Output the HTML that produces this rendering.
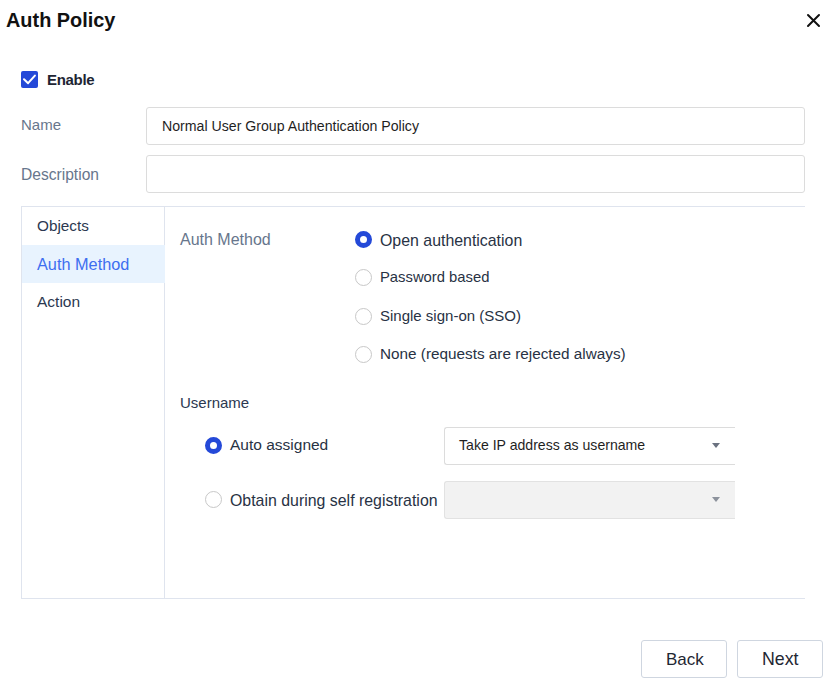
<!DOCTYPE html>
<html>
<head>
<meta charset="utf-8">
<style>
*{box-sizing:border-box;margin:0;padding:0}
html,body{width:831px;height:682px;overflow:hidden;background:#fff}
body{position:relative;font-family:"Liberation Sans",sans-serif;color:#283244}
.t{position:absolute;white-space:nowrap;line-height:1}
.box{position:absolute}
.inp{position:absolute;border:1px solid #dcdcdc;border-radius:3px;background:#fff}
.radio{position:absolute;width:17px;height:17px;border-radius:50%;border:1px solid #c8c8c8;background:#fff}
.radio.on{border:5px solid #2449d8}
.sel{position:absolute;border:1px solid #dcdcdc;border-right:none;border-radius:3px 0 0 3px;background:#fff}
.sel.dis{background:#f2f2f2;border-color:#e2e2e2}
.tri{position:absolute;width:0;height:0;border-left:4px solid transparent;border-right:4px solid transparent;border-top:5px solid #6b7280}
.btn{position:absolute;border:1px solid #cfd6e0;border-radius:3px;background:#fff;width:86px;height:38px}
</style>
</head>
<body>
<!-- header -->
<div class="t" style="left:6px;top:11px;font-size:19.9px;font-weight:bold;color:#111">Auth Policy</div>
<svg class="box" style="left:806px;top:13px" width="15" height="15" viewBox="0 0 15 15"><path d="M2 2 L13 13 M13 2 L2 13" stroke="#111" stroke-width="2" stroke-linecap="round"/></svg>

<!-- enable -->
<div class="box" style="left:21px;top:71px;width:17px;height:17px;background:#2449d8;border-radius:2px"></div>
<svg class="box" style="left:21px;top:71px" width="17" height="17" viewBox="0 0 17 17"><path d="M3 8.2 L7.1 12.2 L13.9 4.6" fill="none" stroke="#fff" stroke-width="2" stroke-linecap="round" stroke-linejoin="round"/></svg>
<div class="t" style="left:47px;top:72px;font-size:15px;letter-spacing:-0.3px;font-weight:bold;color:#1e2533">Enable</div>

<!-- name -->
<div class="t" style="left:21px;top:117px;font-size:15px;color:#67768c">Name</div>
<div class="inp" style="left:146px;top:107px;width:659px;height:38px"></div>
<div class="t" style="left:162px;top:119px;font-size:14.15px;color:#1f1f1f">Normal User Group Authentication Policy</div>

<div class="t" style="left:21px;top:167px;font-size:15.6px;color:#67768c">Description</div>
<div class="inp" style="left:146px;top:155px;width:659px;height:38px"></div>

<!-- panel -->
<div class="box" style="left:21px;top:206px;width:784px;height:1px;background:#dfe4ee"></div>
<div class="box" style="left:21px;top:598px;width:784px;height:1px;background:#dfe4ee"></div>
<div class="box" style="left:21px;top:206px;width:1px;height:393px;background:#dfe4ee"></div>
<div class="box" style="left:164px;top:206px;width:1px;height:393px;background:#dfe4ee"></div>
<div class="box" style="left:22px;top:245px;width:143px;height:38px;background:#e8f3fe"></div>

<div class="t" style="left:37px;top:218px;font-size:15.3px;color:#2b3850">Objects</div>
<div class="t" style="left:37px;top:256px;font-size:16.3px;color:#3d6ef0">Auth Method</div>
<div class="t" style="left:37px;top:294px;font-size:15.5px;color:#2b3850">Action</div>

<div class="t" style="left:180px;top:232px;font-size:16px;color:#67768c">Auth Method</div>

<div class="radio on" style="left:355px;top:231px"></div>
<div class="t" style="left:380px;top:233px;font-size:15.9px">Open authentication</div>
<div class="radio" style="left:355px;top:269px"></div>
<div class="t" style="left:380px;top:270px;font-size:14.8px">Password based</div>
<div class="radio" style="left:355px;top:308px"></div>
<div class="t" style="left:380px;top:308px;font-size:15px">Single sign-on (SSO)</div>
<div class="radio" style="left:355px;top:346px"></div>
<div class="t" style="left:380px;top:346px;font-size:15.3px">None (requests are rejected always)</div>

<div class="t" style="left:180px;top:395px;font-size:15px;color:#2b3850">Username</div>

<div class="radio on" style="left:205px;top:437px"></div>
<div class="t" style="left:230px;top:437px;font-size:15.5px">Auto assigned</div>
<div class="sel" style="left:444px;top:427px;width:291px;height:38px"></div>
<div class="t" style="left:459px;top:438px;font-size:14.1px;color:#1f1f1f">Take IP address as username</div>
<div class="tri" style="left:712px;top:443px"></div>

<div class="radio" style="left:205px;top:491px"></div>
<div class="t" style="left:230px;top:493px;font-size:15.9px">Obtain during self registration</div>
<div class="sel dis" style="left:444px;top:481px;width:291px;height:38px"></div>
<div class="tri" style="left:712px;top:497px;border-top-color:#8c929c"></div>

<!-- buttons -->
<div class="btn" style="left:641px;top:640px"></div>
<div class="t" style="left:666px;top:651px;font-size:17px;color:#1f2733">Back</div>
<div class="btn" style="left:737px;top:640px"></div>
<div class="t" style="left:762px;top:651px;font-size:17.8px;color:#1f2733">Next</div>
</body>
</html>
